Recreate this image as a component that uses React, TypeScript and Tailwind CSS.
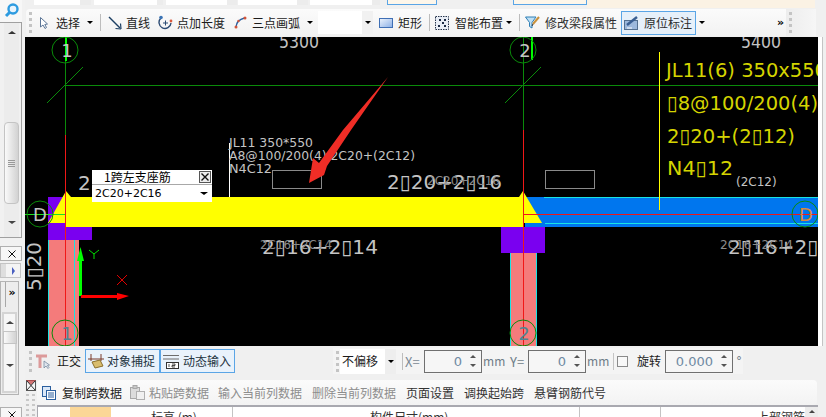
import React from "react";

const cjk = "font-['Noto_Sans_CJK_SC','Noto_Sans',sans-serif]";
const dv = "font-['DejaVu_Sans',sans-serif]";

function Grip({ className = "" }: { className?: string }) {
  return (
    <span className={`flex flex-col gap-[3px] w-[3px] shrink-0 ${className}`}>
      <i className="block w-[3px] h-[3px] bg-[#c4c4c4]" />
      <i className="block w-[3px] h-[3px] bg-[#c4c4c4]" />
      <i className="block w-[3px] h-[3px] bg-[#c4c4c4]" />
      <i className="block w-[3px] h-[3px] bg-[#c4c4c4]" />
    </span>
  );
}

function Caret({ className = "" }: { className?: string }) {
  return <span className={`block w-0 h-0 shrink-0 border-x-[3px] border-x-transparent border-t-[3px] border-t-black ${className}`} />;
}

function Sep({ className = "" }: { className?: string }) {
  return <span className={`block w-px h-[17px] shrink-0 bg-[#bdbdbd] ${className}`} />;
}

function Label({ children, className = "" }: { children: React.ReactNode; className?: string }) {
  return <span className={`shrink-0 text-[12px] leading-none whitespace-nowrap text-[#1c1c1c] ${cjk} ${className}`}>{children}</span>;
}

function Spin({ value, w }: { value: string; w: string }) {
  return (
    <span className={`flex items-center justify-end h-[23px] border border-[#707070] bg-[#f6f6f6] shrink-0 ${w}`}>
      <span className={`text-[13px] text-[#6f8aa3] leading-none ${dv}`}>{value}</span>
      <span className="flex flex-col gap-[6px] ml-[8px] mr-[5px]">
        <span className="block w-0 h-0 border-x-[3px] border-x-transparent border-b-[3px] border-b-[#555]" />
        <span className="block w-0 h-0 border-x-[3px] border-x-transparent border-t-[3px] border-t-[#555]" />
      </span>
    </span>
  );
}

function CloseTab({ className = "" }: { className?: string }) {
  return (
    <div className={`w-[22px] h-[15px] border border-[#b0b0b0] bg-[#f7f7f7] flex items-center justify-end pr-[5px] shrink-0 ${className}`}>
      <svg width="8" height="8" viewBox="0 0 8 8"><path d="M0.5 0.5 L7.5 7.5 M7.5 0.5 L0.5 7.5" stroke="#111" /></svg>
    </div>
  );
}

function LeftDock() {
  return (
    <div className="w-[25px] h-[417px] shrink-0 flex flex-col bg-[#f1f1f1] overflow-hidden">
      <div className="h-[22px] w-[22px] flex items-center justify-center bg-[#f7f7f7] shrink-0">
        <svg width="15" height="15" viewBox="0 0 15 15" className="mt-[-2px]">
          <circle cx="9" cy="6" r="4.5" fill="#e8f4fd" stroke="#2d9be0" strokeWidth="2.4" />
          <path d="M5.5 9.5 L2 13" stroke="#2d9be0" strokeWidth="3" />
        </svg>
      </div>
      <div className="w-[22px] h-[216px] shrink-0 border-y border-r border-y-[#a0a0a0] border-r-[#a0a0a0] pl-[4px] flex">
        <div className="w-[15px] flex flex-col items-center bg-[#ececec]">
          <span className="block mt-[8px] w-0 h-0 border-x-[4px] border-x-transparent border-b-[3px] border-b-[#333]" />
          <div className="mt-[88px] w-[15px] h-[82px] rounded-sm border border-[#c4c4c4] bg-gradient-to-r from-[#fafafa] to-[#d2d2d2] flex flex-col items-center justify-center gap-[1px]">
            <i className="block w-[7px] h-px bg-[#999]" />
            <i className="block w-[7px] h-px bg-[#999]" />
            <i className="block w-[7px] h-px bg-[#999]" />
            <i className="block w-[7px] h-px bg-[#999]" />
          </div>
          <span className="block mt-[17px] w-0 h-0 border-x-[4px] border-x-transparent border-t-[3px] border-t-[#444]" />
        </div>
      </div>
      <CloseTab className="mt-[8px]" />
      <div className="mt-[2px] w-[21px] h-[15px] shrink-0 border border-[#c4c4c4] bg-[#dedede] flex justify-end">
        <span className="w-[14px] bg-[#f4f4f4] flex items-center justify-center">
          <span className="block w-0 h-0 border-y-[4px] border-y-transparent border-l-[3px] border-l-[#4a5fc0]" />
        </span>
      </div>
      <div className="mt-[3px] w-[19px] h-[114px] shrink-0 border border-[#b4b4b4] bg-[#ededed] flex flex-col">
        <div className="h-[25px] flex justify-end shrink-0">
          <span className={`w-[13px] border-l border-[#a8a8a8] h-full text-center text-[11px] font-bold leading-[22px] text-black ${dv}`}>»</span>
        </div>
        <div className="mt-[5px] mx-px h-[81px] border-2 border-[#d4d4d4] bg-[#f6f6f6] flex flex-col items-center pt-[7px]">
          <span className="block w-0 h-0 border-x-[4px] border-x-transparent border-b-[3px] border-b-[#444]" />
          <span className="block mt-[7px] w-[14px] h-[13px] border border-[#c4c4c4] bg-gradient-to-r from-[#fafafa] to-[#d2d2d2]" />
          <span className="block mt-[20px] w-0 h-0 border-x-[4px] border-x-transparent border-t-[3px] border-t-[#444]" />
        </div>
      </div>
      <CloseTab className="mt-[12px]" />
    </div>
  );
}

function TopStrip() {
  return (
    <div className="h-[9px] flex items-start bg-[#f0f0f0] overflow-hidden">
      <span className="ml-[9px] w-[57px] h-[5px] flex justify-end bg-white"><i className="w-[11px] bg-[#ececec]" /></span>
      <span className="ml-[3px] w-[69px] h-[5px] flex justify-end bg-white"><i className="w-[6px] bg-[#ececec]" /></span>
      <span className="ml-[3px] w-[71px] h-[5px] flex justify-end bg-white"><i className="w-[10px] bg-[#ececec]" /></span>
      <span className="ml-px w-[70px] h-[5px] flex justify-end bg-white"><i className="w-[11px] bg-[#ececec]" /></span>
      <span className="ml-[2px] w-[70px] h-[5px] flex justify-end bg-white"><i className="w-[8px] bg-[#ececec]" /></span>
      <span className="ml-[7px] w-[50px] h-[5px] border border-t-0 border-[#5aa5e6] bg-[#fdf6ea]" />
      <span className="ml-[76px] w-[74px] h-[5px] border border-t-0 border-[#5aa5e6] bg-[#fdf6ea]" />
      <span className="w-[228px] h-[8px] bg-[#fbf2e4]" />
    </div>
  );
}

function MainToolbar() {
  return (
    <div className="h-[28px] flex items-center bg-[#f0f0f0] pl-px pb-[1px]">
      <div className="w-[760px] h-full flex items-center bg-gradient-to-b from-[#fbfbfb] to-[#f2f2f2] rounded-l-sm">
        <Grip className="ml-[3px]" />
        <svg width="8" height="12" viewBox="0 0 8 12" className="ml-[8px] shrink-0">
          <path d="M0.5 0.5 V10 L3 8 L5 11.5 L6.5 10.5 L4.8 7.5 L7.5 7 Z" fill="#fff" stroke="#5b7596" />
        </svg>
        <Label className="ml-[8px]">选择</Label>
        <Caret className="ml-[7px]" />
        <Sep className="ml-[7px]" />
        <svg width="14" height="14" viewBox="0 0 14 14" className="ml-[7px] shrink-0">
          <path d="M1 1 L12 12" stroke="#1c3f63" strokeWidth="1.4" />
          <path d="M13 13 L12.5 7.5 M13 13 L7.5 12.5" stroke="#1c3f63" strokeWidth="1.2" />
        </svg>
        <Label className="ml-[4px]">直线</Label>
        <svg width="15" height="15" viewBox="0 0 15 15" className="ml-[8px] shrink-0">
          <path d="M3 3 A6 6 0 1 0 13 8" fill="none" stroke="#2b4a73" strokeWidth="1.4" />
          <path d="M5 8 H10 M7.5 5.5 V10.5" stroke="#2b4a73" />
          <circle cx="3" cy="2.5" r="1.8" fill="#3b74b5" />
          <circle cx="13" cy="6" r="1.4" fill="#d9583c" />
        </svg>
        <Label className="ml-[4px]">点加长度</Label>
        <svg width="13" height="13" viewBox="0 0 13 13" className="ml-[9px] shrink-0">
          <path d="M2 11 Q2.5 4 10.5 2" fill="none" stroke="#2b5f9e" strokeWidth="1.3" />
          <circle cx="2" cy="11" r="1.5" fill="#d2543a" />
          <circle cx="4.5" cy="5" r="1.2" fill="#d2543a" />
          <circle cx="11" cy="2" r="1.5" fill="#d2543a" />
        </svg>
        <Label className="ml-[5px]">三点画弧</Label>
        <Caret className="ml-[7px]" />
        <span className="ml-[5px] w-[55px] h-[23px] shrink-0 flex justify-end bg-white">
          <span className="w-[11px] bg-[#f1f1f1] flex items-center justify-center"><Caret /></span>
        </span>
        <span className="ml-[6px] w-[14px] h-[10px] shrink-0 border border-[#3f6fb5] bg-gradient-to-br from-[#eaf1fb] to-[#8fb2e6]" />
        <Label className="ml-[5px]">矩形</Label>
        <Sep className="ml-[7px]" />
        <svg width="14" height="14" viewBox="0 0 14 14" className="ml-[5px] shrink-0">
          <rect x="0.5" y="0.5" width="13" height="13" fill="#e9eef6" stroke="#26354d" strokeDasharray="1.5 1" />
          <path d="M4 4 h2 M9 4 h2 M7 7 h2 M3 10 h2 M9 10 h2" stroke="#1b2a44" strokeWidth="2" />
        </svg>
        <Label className="ml-[6px]">智能布置</Label>
        <Caret className="ml-[3px]" />
        <Sep className="ml-[7px]" />
        <svg width="15" height="15" viewBox="0 0 15 15" className="ml-[5px] shrink-0">
          <path d="M0.5 2 H11 L7 7.5 V13 L4.5 11.5 V7.5 Z" fill="#bfe0f5" stroke="#2f7fb5" />
          <path d="M8 9 L14 2" stroke="#c9913c" strokeWidth="2" />
          <path d="M8 9 L7 11" stroke="#333" />
        </svg>
        <Label className="ml-[5px] text-[#2d2d2d]">修改梁段属性</Label>
        <span className="ml-[4px] w-[75px] h-[24px] shrink-0 flex items-center border border-[#5aa5e6] bg-[#e6f0fa]">
          <svg width="15" height="15" viewBox="0 0 15 15" className="ml-[2px] shrink-0">
            <rect x="0.5" y="5.5" width="13" height="9" fill="#9db9dc" stroke="#54708f" />
            <path d="M3 10 L13 2" stroke="#3a5f92" strokeWidth="2.4" />
            <path d="M3 13 H8" stroke="#fff" />
          </svg>
          <Label className="ml-[5px] text-[#2d2d2d]">原位标注</Label>
        </span>
        <Caret className="ml-[3px]" />
        <span className={`ml-[72px] w-[8px] text-[11px] font-bold leading-none text-black ${dv}`}>»</span>
      </div>
      <div className="w-[30px] h-full flex items-center ml-0 bg-gradient-to-r from-[#ededed] to-[#f6f6f6]">
        <Grip className="ml-[3px]" />
      </div>
    </div>
  );
}

function Canvas() {
  const gray = "#c4c4c4";
  const bar = "#d4d400";
  return (
    <div className="relative w-[793px] h-[309px] shrink-0 bg-black overflow-hidden">
      <svg width="793" height="309" viewBox="25 37 793 309" className="block">
        {/* columns */}
        <rect x="48" y="240" width="31" height="106" fill="#f47b7b" />
        <path d="M48.5 240 V346 M74.5 240 V346" stroke="#19e3e3" />
        <rect x="510" y="253" width="27" height="93" fill="#f47b7b" />
        <path d="M510.5 253 V346 M536.5 253 V346" stroke="#19e3e3" />
        <rect x="48" y="197" width="44" height="43" fill="#7a00f0" />
        <rect x="501" y="227" width="44" height="26" fill="#7a00f0" />
        {/* beams */}
        <rect x="525" y="197" width="293" height="30" fill="#0076ee" />
        <path d="M544 197.5 H818 M545 223.5 H818" stroke="#19e3e3" />
        <rect x="65" y="197" width="459" height="30" fill="#ffff00" />
        <polygon points="48,223 66,191 71,197 66,223" fill="#ffff00" />
        <polygon points="519,197 523,191 542,223 524,223" fill="#ffff00" />
        {/* axes */}
        <path d="M65.5 37 V135" stroke="#0a8a0a" />
        <path d="M523.5 37 V130" stroke="#0a8a0a" />
        <path d="M65 85.5 H818 M47 103 L83 67 M505 103 L541 67" stroke="#0a8a0a" />
        <path d="M65.5 135 V346 M523.5 130 V346" stroke="#f01818" />
        <path d="M524 214.5 H818" stroke="#f01818" />
        <path d="M25 214.5 H65" stroke="#1fe01f" />
        <rect x="65" y="37" width="2" height="24" fill="#00ff00" />
        <rect x="531" y="37" width="2" height="23" fill="#00ff00" />
        <path d="M659.5 52 V210" stroke="#ffff00" />
        <path d="M229.5 143 V197" stroke="#ffffff" />
        <rect x="272.5" y="170.5" width="49" height="18" fill="none" stroke="#8a8a8a" />
        <rect x="545.5" y="170.5" width="49" height="18" fill="none" stroke="#8a8a8a" />
        {/* axis bubbles */}
        <circle cx="65" cy="50" r="13" fill="none" stroke="#0a8a0a" />
        <circle cx="523" cy="50" r="13" fill="none" stroke="#0a8a0a" />
        <circle cx="40" cy="214" r="13" fill="none" stroke="#0a8a0a" />
        <circle cx="805" cy="214" r="13" fill="none" stroke="#0a8a0a" />
        <circle cx="65" cy="333" r="13" fill="none" stroke="#0a8a0a" />
        <circle cx="523" cy="333" r="13" fill="none" stroke="#0a8a0a" />
        <g className={dv}>
          <text x="67" y="57" textAnchor="middle" fontSize="18" fill={gray}>1</text>
          <text x="525" y="57" textAnchor="middle" fontSize="18" fill={gray}>2</text>
          <text x="40" y="221" textAnchor="middle" fontSize="18" fill={gray}>D</text>
          <text x="806" y="221" textAnchor="middle" fontSize="18" fill="#d88a3c">D</text>
          <text x="67" y="340" textAnchor="middle" fontSize="18" fill="#4f8592">1</text>
          <text x="524" y="340" textAnchor="middle" fontSize="18" fill="#4f8592">2</text>
          <text x="279" y="48" fontSize="17" textLength="40" lengthAdjust="spacingAndGlyphs" fill={gray}>5300</text>
          <text x="741" y="48" fontSize="17" textLength="40" lengthAdjust="spacingAndGlyphs" fill={gray}>5400</text>
          <text x="666" y="77" fontSize="20" textLength="161" lengthAdjust="spacingAndGlyphs" fill={bar}>JL11(6) 350x550</text>
          <text x="667" y="110" fontSize="20" textLength="151" lengthAdjust="spacingAndGlyphs" fill={bar}>▯8@100/200(4)</text>
          <text x="667" y="143" fontSize="20" textLength="128" lengthAdjust="spacingAndGlyphs" fill={bar}>2▯20+(2▯12)</text>
          <text x="667" y="175" fontSize="20" textLength="66" lengthAdjust="spacingAndGlyphs" fill={bar}>N4▯12</text>
          <text x="736" y="186" fontSize="12" fill={gray}>(2C12)</text>
          <text x="229" y="147" fontSize="13" textLength="84" lengthAdjust="spacingAndGlyphs" fill={gray}>JL11 350*550</text>
          <text x="229" y="160" fontSize="13" textLength="186" lengthAdjust="spacingAndGlyphs" fill={gray}>A8@100/200(4) 2C20+(2C12)</text>
          <text x="229" y="173" fontSize="13" textLength="43" lengthAdjust="spacingAndGlyphs" fill={gray}>N4C12</text>
          <text x="78" y="190" fontSize="20" fill={gray}>2</text>
          <text x="387" y="189" fontSize="20" textLength="115" lengthAdjust="spacingAndGlyphs" fill={gray}>2▯20+2▯16</text>
          <text x="427" y="185" fontSize="12" textLength="73" lengthAdjust="spacingAndGlyphs" fill="#8c8c8c">2C20+2C16</text>
          <text x="262" y="254" fontSize="20" textLength="116" lengthAdjust="spacingAndGlyphs" fill={gray}>2▯16+2▯14</text>
          <text x="260" y="249" fontSize="12" textLength="72" lengthAdjust="spacingAndGlyphs" fill="#8c8c8c">2C16+2C14</text>
          <text x="728" y="254" fontSize="20" textLength="116" lengthAdjust="spacingAndGlyphs" fill={gray}>2▯16+2▯14</text>
          <text x="720" y="249" fontSize="12" textLength="73" lengthAdjust="spacingAndGlyphs" fill="#8c8c8c">2C16+2C14</text>
          <text transform="translate(41 291) rotate(-90)" fontSize="20" textLength="49" lengthAdjust="spacingAndGlyphs" fill={gray}>5▯20</text>
        </g>
        {/* ucs */}
        <rect x="79" y="258" width="3" height="38" fill="#00ff00" />
        <polygon points="80.5,247 84,261 77,261" fill="#00ff00" />
        <rect x="81" y="295" width="38" height="3" fill="#ff0000" />
        <polygon points="129,296 117,293 117,300" fill="#ff0000" />
        <path d="M89 250 L94 254 L99 250 M94 254 V259" stroke="#00e000" fill="none" />
        <path d="M117 275 L127 285 M127 275 L117 285" stroke="#e00000" />
        {/* annotation arrow */}
        <polygon points="388,77 351,130 327,166 324,175 309,183 313,158 319,163 343,130" fill="#f02d26" />
      </svg>
      <div className="absolute left-[67px] top-[133px] w-[120px] h-[32px] bg-white flex flex-col">
        <div className="h-[15px] flex items-center border-b border-[#a8a8a8]">
          <span className={`ml-[12px] text-[12px] leading-none text-black ${cjk}`}>1跨左支座筋</span>
          <span className="ml-auto mr-px w-[12px] h-[12px] border border-[#555] bg-[#ececec] flex items-center justify-center">
            <svg width="8" height="8" viewBox="0 0 8 8"><path d="M0.5 0.5 L7.5 7.5 M7.5 0.5 L0.5 7.5" stroke="#111" strokeWidth="1.4" /></svg>
          </span>
        </div>
        <div className="flex-1 flex items-center">
          <span className={`ml-[3px] text-[11px] leading-none text-black ${dv}`}>2C20+2C16</span>
          <span className="block ml-auto mr-[4px] w-0 h-0 border-x-[4px] border-x-transparent border-t-[3px] border-t-black" />
        </div>
      </div>
    </div>
  );
}

function SnapRow() {
  return (
    <div className="h-[34px] flex items-start pl-px pt-[2px]">
      <div className="h-[26px] flex items-center">
        <Grip className="ml-[3px]" />
        <svg width="15" height="15" viewBox="0 0 15 15" className="ml-[4px] shrink-0">
          <path d="M0 2 H11 M4 2 V14" stroke="#dc9a9a" strokeWidth="3" fill="none" />
          <path d="M8 7 V14 L10 12 L12 14.5 L13 13.5 L11.5 11.5 L13.5 11 Z" fill="#dfe6ee" stroke="#6a7f96" strokeWidth="0.7" />
        </svg>
        <Label className="ml-[6px]">正交</Label>
        <span className="ml-[4px] w-[75px] h-[24px] shrink-0 flex items-center border border-[#5aa5e6] bg-[#e9f2fb]">
          <svg width="17" height="16" viewBox="0 0 17 16" className="ml-[2px] shrink-0">
            <path d="M3 1 V8 M13 1 V8 M0 6 H16" stroke="#7a3b2b" />
            <path d="M4 9 L12 7 L15 13 L7 15 Z" fill="#d8bd6e" stroke="#8a6f2c" />
          </svg>
          <Label className="ml-[2px] text-[#24343f]">对象捕捉</Label>
        </span>
        <span className="w-[75px] h-[24px] shrink-0 flex items-center border border-[#5aa5e6] bg-[#e9f2fb]">
          <svg width="17" height="15" viewBox="0 0 17 15" className="ml-[2px] shrink-0">
            <path d="M0 1.5 H16 M0 5 H16" stroke="#6d6d6d" />
            <rect x="3.5" y="8.5" width="12" height="6" fill="#fff" stroke="#333" />
            <path d="M6 10 V13 M9 10 H12 V11.5 H9 V13 H12" stroke="#222" fill="none" strokeWidth="0.8" />
          </svg>
          <Label className="ml-[3px] text-[#24343f]">动态输入</Label>
        </span>
      </div>
      <div className="ml-[98px] w-[410px] h-[26px] flex items-center bg-[#f4f4f4]">
        <Grip className="ml-[3px]" />
        <span className="ml-px w-[45px] h-[25px] shrink-0 flex items-center bg-white">
          <Label className="ml-[2px]">不偏移</Label>
        </span>
        <span className="w-[11px] h-[25px] shrink-0 bg-[#eeeeee] flex items-center justify-center"><Caret /></span>
        <Sep className="ml-[6px]" />
        <span className={`ml-[2px] w-[19px] text-[13px] leading-none text-[#7b8995] ${cjk}`}>X=</span>
        <Spin value="0" w="w-[58px]" />
        <span className={`ml-px w-[27px] text-[12px] leading-none text-[#6f7d88] ${cjk}`}>mm</span>
        <span className={`w-[18px] text-[13px] leading-none text-[#6f7d88] ${cjk}`}>Y=</span>
        <Spin value="0" w="w-[58px]" />
        <span className={`ml-px w-[26px] text-[12px] leading-none text-[#6f7d88] ${cjk}`}>mm</span>
        <Sep className="bg-[#c4c4c4]" />
        <span className="ml-[3px] w-[11px] h-[11px] shrink-0 border border-[#8a8a8a] bg-[#f8f8f8]" />
        <Label className="ml-[9px]">旋转</Label>
        <span className="ml-[4px]"><Spin value="0.000" w="w-[68px]" /></span>
        <span className={`ml-[3px] text-[12px] leading-none text-[#6f7d88] ${dv}`}>°</span>
      </div>
    </div>
  );
}

function DataRows() {
  const off = "text-[#8d8d8d]";
  return (
    <div className="h-[37px] flex">
      <div className="w-[12px] shrink-0 pl-px">
        <svg width="10" height="11" viewBox="0 0 10 11" className="block">
          <rect x="0.5" y="0.5" width="9" height="10" fill="#f4f4f4" stroke="#555" />
          <path d="M0 0 L5 5 L10 0 Z" fill="#c94a4a" opacity="0.75" />
          <path d="M1 1 L9 10 M9 1 L1 10" stroke="#333" />
        </svg>
        <div className="mt-[3px] grid grid-cols-2 gap-[3px] w-[9px]">
          {Array.from({ length: 10 }).map((_, i) => (
            <i key={i} className="block w-[3px] h-[2px] bg-[#c8c8c8]" />
          ))}
        </div>
      </div>
      <div className="flex-1 flex flex-col min-w-0">
        <div className="h-[25px] w-[780px] flex items-center bg-gradient-to-b from-[#fbfbfb] to-[#f3f3f3] rounded-sm">
          <svg width="14" height="14" viewBox="0 0 14 14" className="ml-[5px] shrink-0">
            <rect x="0.5" y="0.5" width="8" height="10" fill="#dbe8f7" stroke="#2b5f9e" />
            <rect x="4.5" y="4.5" width="9" height="9" fill="#fff" stroke="#2b5f9e" />
            <path d="M6 7 H12 M6 9 H12 M6 11 H12" stroke="#2b5f9e" />
          </svg>
          <Label className="ml-[6px]">复制跨数据</Label>
          <svg width="15" height="15" viewBox="0 0 15 15" className="ml-[8px] shrink-0">
            <rect x="0.5" y="2.5" width="9" height="11" fill="#dcdcdc" stroke="#a8a8a8" />
            <rect x="3" y="0.5" width="4" height="3" fill="#c8c8c8" stroke="#a8a8a8" />
            <rect x="6.5" y="6.5" width="8" height="8" fill="#f0f0f0" stroke="#b0b0b0" />
          </svg>
          <Label className={`ml-[4px] ${off}`}>粘贴跨数据</Label>
          <Label className={`ml-[9px] ${off}`}>输入当前列数据</Label>
          <Label className={`ml-[10px] ${off}`}>删除当前列数据</Label>
          <Label className="ml-[10px] text-[#333]">页面设置</Label>
          <Label className="ml-[10px] text-[#333]">调换起始跨</Label>
          <Label className="ml-[10px] text-[#333]">悬臂钢筋代号</Label>
        </div>
        <div className={`h-[12px] w-[781px] flex border-t-2 border-l border-[#a9a9b0] text-[12px] leading-[14px] text-[#333] overflow-hidden bg-white ${cjk}`}>
          <span className="w-[32px] shrink-0" />
          <span className="w-[41px] shrink-0 bg-[#fbd797]" />
          <span className="w-[122px] shrink-0 border-r border-[#c4c4c4] pl-[40px] pt-[3px]">标高 (m)</span>
          <span className="w-[347px] shrink-0 border-r border-[#c4c4c4] pl-[137px] pt-[3px]">构件尺寸(mm)</span>
          <span className="w-[81px] shrink-0 border-r border-[#c4c4c4]" />
          <span className="flex-1 flex justify-end">
            <span className="pt-[3px]">上部钢筋</span>
            <span className="w-[13px] bg-[#ececec] flex justify-center pt-[3px]">
              <span className="block w-0 h-0 border-x-[3px] border-x-transparent border-b-[3px] border-b-[#444]" />
            </span>
          </span>
        </div>
      </div>
    </div>
  );
}

export default function App() {
  return (
    <div className="w-[826px] h-[417px] flex bg-[#f0f0f0] overflow-hidden">
      <LeftDock />
      <div className="flex-1 flex flex-col min-w-0">
        <TopStrip />
        <MainToolbar />
        <div className="h-[309px] flex">
          <Canvas />
          <div className="flex-1 flex">
            <span className="w-[4px] bg-white" />
            <span className="w-px bg-[#c4c4c4]" />
          </div>
        </div>
        <SnapRow />
        <DataRows />
      </div>
    </div>
  );
}
